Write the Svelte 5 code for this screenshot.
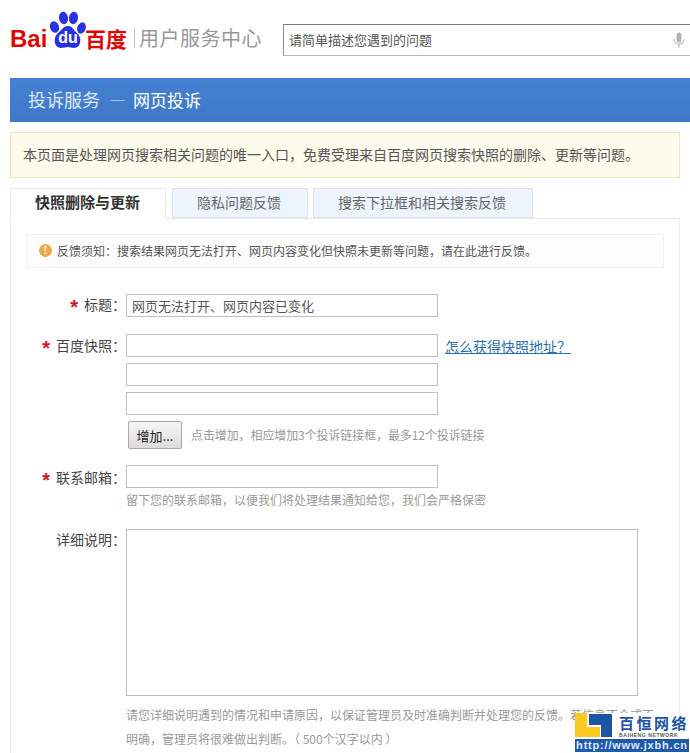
<script>
    let tabs = ['快照删除与更新', '隐私问题反馈', '搜索下拉框和相关搜索反馈'];
</script>

<div class="page">
    <header class="top">
        <div class="logo">
            <span class="bai">Bai</span>
            <span class="paw">
                <svg width="36" height="38" viewBox="0 0 36 38">
                    <ellipse cx="4.500" cy="16" rx="4.500" ry="5.800" transform="rotate(-20 4.500 16)" fill="#2932e1"/>
                    <ellipse cx="13.500" cy="7" rx="4.500" ry="6.200" transform="rotate(-8 13.500 7)" fill="#2932e1"/>
                    <ellipse cx="23.500" cy="7" rx="4.500" ry="6.200" transform="rotate(8 23.500 7)" fill="#2932e1"/>
                    <ellipse cx="31.500" cy="17" rx="4.200" ry="5.800" transform="rotate(20 31.500 17)" fill="#2932e1"/>
                    <path d="M18 15c5 0 6 5 10 8 4 4 3 14-4 14-3 0-4-1-6-1s-4 1-7 1c-7 0-8-10-4-14 4-3 6-8 11-8z" fill="#2932e1"/>
                </svg>
                <span class="du">du</span>
            </span>
            <span class="baidu">百度</span>
            <span class="sep"></span>
            <span class="center">用户服务中心</span>
        </div>
        <div class="search">
            <span>请简单描述您遇到的问题</span>
            <svg width="12" height="16" viewBox="0 0 12 16">
                <rect x="3.500" y="0.500" width="5" height="10" rx="2.500" fill="#b5b5b5"/>
                <path d="M1 7c0 3 2 5 5 5s5-2 5-5" fill="none" stroke="#c4c4c4" stroke-width="1.200"/>
                <rect x="5.200" y="12" width="1.600" height="3.500" fill="#c4c4c4"/>
            </svg>
        </div>
    </header>

    <div class="crumb">
        <span class="crumb-a">投诉服务</span>
        <span class="dash"></span>
        <span class="crumb-b">网页投诉</span>
    </div>

    <div class="notice">本页面是处理网页搜索相关问题的唯一入口，免费受理来自百度网页搜索快照的删除、更新等问题。</div>

    <div class="tabs">
        {#each tabs as tab, i}
            <div class="tab" class:active={i === 0}>{tab}</div>
        {/each}
    </div>

    <div class="panel">
        <div class="tip">
            <span class="tip-icon">!</span>
            <span>反馈须知：搜索结果网页无法打开、网页内容变化但快照未更新等问题，请在此进行反馈。</span>
        </div>

        <div class="form">
            <div class="row first">
                <div class="label"><i>*</i>标题：</div>
                <div class="fields"><div class="input">网页无法打开、网页内容已变化</div></div>
            </div>

            <div class="row snap">
                <div class="label"><i>*</i>百度快照：</div>
                <div class="fields">
                    <div class="with-link">
                        <div class="input"></div>
                        <span class="link">怎么获得快照地址？</span>
                    </div>
                    <div class="input"></div>
                    <div class="input"></div>
                    <div class="add">
                        <button type="button">增加...</button>
                        <span class="hint">点击增加，相应增加3个投诉链接框，最多12个投诉链接</span>
                    </div>
                </div>
            </div>

            <div class="row mail">
                <div class="label"><i>*</i>联系邮箱：</div>
                <div class="fields">
                    <div class="input"></div>
                    <span class="hint mail-hint">留下您的联系邮箱，以便我们将处理结果通知给您，我们会严格保密</span>
                </div>
            </div>

            <div class="row detail">
                <div class="label">详细说明：</div>
                <div class="fields">
                    <div class="area"></div>
                    <p class="hint long">请您详细说明遇到的情况和申请原因，以保证管理员及时准确判断并处理您的反馈。若信息不全或不明确，管理员将很难做出判断。（ 500个汉字以内 ）</p>
                </div>
            </div>
        </div>
    </div>

    <div class="mark">
        <div class="mark-top">
            <svg width="38" height="25" viewBox="0 0 38 25">
                <path d="M0 0h12v14h13v10H0z" fill="#fcc923"/>
                <path d="M14 1h23v23H26V12H14z" fill="#1f55a5"/>
            </svg>
            <div class="mark-name">
                <span class="cn">百恒网络</span>
                <span class="en">BAIHENG NETWORK</span>
            </div>
        </div>
        <div class="url">http://www.jxbh.cn</div>
    </div>
</div>

<style>
    :global(body) {
        margin: 0;
        background: #fff;
    }
    .page {
        position: relative;
        height: 753px;
        overflow: hidden;
        font-family: "Noto Sans CJK SC", "Liberation Sans", sans-serif;
        font-size: 13px;
        color: #666;
    }
    .top {
        display: flex;
        align-items: flex-start;
        height: 78px;
        padding-left: 10px;
    }
    .logo {
        display: flex;
        align-items: center;
        height: 28px;
        margin-top: 24px;
        width: 273px;
    }
    .bai {
        font-family: "Liberation Sans", sans-serif;
        font-size: 24px;
        font-weight: 700;
        line-height: 28px;
        padding-top: 2px;
        color: #e10601;
        width: 40px;
    }
    .paw {
        position: relative;
        width: 36px;
        height: 28px;
    }
    .paw svg {
        position: absolute;
        left: 0;
        top: -13px;
    }
    .du {
        position: absolute;
        left: 6px;
        top: 6px;
        width: 24px;
        text-align: center;
        font-family: "Liberation Sans", sans-serif;
        font-size: 16px;
        font-weight: 700;
        line-height: 16px;
        color: #fff;
    }
    .baidu {
        font-size: 21px;
        font-weight: 700;
        color: #e10601;
        line-height: 28px;
        width: 42px;
        margin-left: -1px;
    }
    .sep {
        width: 1px;
        height: 20px;
        background: #bbb;
        margin: 0 4px 0 7px;
    }
    .center {
        font-size: 20px;
        color: #999;
        line-height: 28px;
        letter-spacing: 0.500px;
        white-space: nowrap;
    }
    .search {
        flex: 1;
        display: flex;
        align-items: center;
        justify-content: space-between;
        box-sizing: border-box;
        height: 32px;
        margin-top: 24px;
        padding: 0 5px 2px 5px;
        border-top: 1px solid #7a7a7a;
        border-left: 1px solid #8f8f8f;
        border-bottom: 1px solid #b8b8b8;
        color: #555;
    }
    .search svg {
        margin-top: 2px;
    }
    .crumb {
        display: flex;
        align-items: center;
        height: 44px;
        margin-left: 10px;
        padding: 0 0 2px 18px;
        box-sizing: border-box;
        background: linear-gradient(#4580d3, #3f78c6);
        font-size: 18px;
        color: #dfe9f6;
    }
    .dash {
        width: 14px;
        height: 1px;
        background: #a9c4e8;
        margin: 2px 8px 0 11px;
    }
    .crumb-b {
        font-size: 17px;
        color: #fff;
    }
    .notice {
        box-sizing: border-box;
        height: 46px;
        margin: 10px 10px 0;
        padding-left: 12px;
        border: 1px solid #eee5bd;
        background: #fdfbec;
        line-height: 42px;
        font-size: 14px;
        color: #555;
    }
    .tabs {
        display: flex;
        gap: 5px;
        margin: 10px 0 0 10px;
        position: relative;
        z-index: 1;
    }
    .tab {
        box-sizing: border-box;
        height: 30px;
        padding: 0 26px 0 24px;
        border: 1px solid #dfe4ec;
        background: #edf4fd;
        line-height: 26px;
        font-size: 14px;
        color: #666;
    }
    .tab.active {
        height: 31px;
        margin: 0 1px -1px 0;
        width: 156px;
        white-space: nowrap;
        background: #fff;
        border-color: #e8e8e8;
        border-bottom-color: #fff;
        font-size: 15px;
        font-weight: 700;
        color: #333;
    }
    .panel {
        margin: 0 10px;
        padding: 15px 15px 0;
        height: 600px;
        border: 1px solid #e8e8e8;
    }
    .tip {
        display: flex;
        align-items: center;
        gap: 5px;
        box-sizing: border-box;
        height: 34px;
        padding: 0 0 2px 12px;
        border: 1px solid #f2f2f2;
        background: #fcfcfc;
        font-size: 12px;
        color: #555;
    }
    .tip-icon {
        width: 13px;
        height: 13px;
        border-radius: 50%;
        background: #e9a94a;
        color: #fff;
        font: 700 10px/13px "Liberation Sans", sans-serif;
        text-align: center;
    }
    .form {
        padding-top: 26px;
    }
    .row {
        display: flex;
    }
    .snap {
        margin-top: 17px;
    }
    .mail {
        margin-top: 16px;
    }
    .detail {
        margin-top: 21px;
    }
    .label {
        box-sizing: border-box;
        width: 100px;
        height: 23px;
        padding-top: 1px;
        line-height: 20px;
        font-size: 14px;
        text-align: right;
        color: #444;
        white-space: nowrap;
    }
    .first .label,
    .detail .label {
        padding-top: 0;
    }
    .mail .label {
        padding-top: 2px;
    }
    .label i {
        font: 700 20px/20px "Liberation Sans", sans-serif;
        color: #d8101c;
        margin-right: 6px;
        vertical-align: -4px;
    }
    .fields {
        display: flex;
        flex-direction: column;
        align-items: flex-start;
    }
    .input {
        box-sizing: border-box;
        width: 312px;
        height: 23px;
        padding-left: 5px;
        border: 1px solid #c0c0c0;
        line-height: 21px;
        color: #555;
    }
    .input + .input,
    .with-link + .input {
        margin-top: 6px;
    }
    .with-link {
        display: flex;
        align-items: center;
    }
    .link {
        margin-left: 7px;
        font-size: 14px;
        color: #2a6fa8;
        text-decoration: underline;
        white-space: nowrap;
    }
    .add {
        display: flex;
        align-items: center;
        margin: 6px 0 0 2px;
    }
    .add button {
        box-sizing: border-box;
        width: 54px;
        height: 28px;
        padding: 0;
        border: 1px solid #a8a8a8;
        border-radius: 2px;
        background: linear-gradient(#f6f6f6, #dcdcdc);
        font: 13px "Noto Sans CJK SC", "Liberation Sans", sans-serif;
        color: #222;
    }
    .hint {
        font-size: 12px;
        color: #999;
    }
    .add .hint {
        margin-left: 9px;
        padding-bottom: 2px;
        letter-spacing: -0.100px;
    }
    .mail-hint {
        margin-top: 3px;
        line-height: 17px;
    }
    .area {
        box-sizing: border-box;
        width: 512px;
        height: 167px;
        border: 1px solid #bdbdbd;
    }
    .long {
        width: 530px;
        margin: 7px 0 0;
        line-height: 24px;
    }
    .mark {
        position: absolute;
        left: 575px;
        top: 713px;
        width: 114px;
        height: 40px;
        background: #fff;
    }
    .mark-top {
        display: flex;
        height: 26px;
    }
    .mark-name {
        display: flex;
        flex-direction: column;
        margin-left: 6px;
    }
    .cn {
        font-size: 15px;
        line-height: 19px;
        letter-spacing: 2.500px;
        font-weight: 700;
        color: #1f55a5;
        white-space: nowrap;
    }
    .en {
        font: 700 5px/6px "Liberation Sans", sans-serif;
        letter-spacing: 0.600px;
        color: #555;
        white-space: nowrap;
    }
    .url {
        height: 13px;
        background: #1f5aa8;
        color: #dfe9f6;
        font: 700 11px/13px "Liberation Sans", sans-serif;
        letter-spacing: 0.800px;
        text-align: center;
        white-space: nowrap;
    }
</style>
